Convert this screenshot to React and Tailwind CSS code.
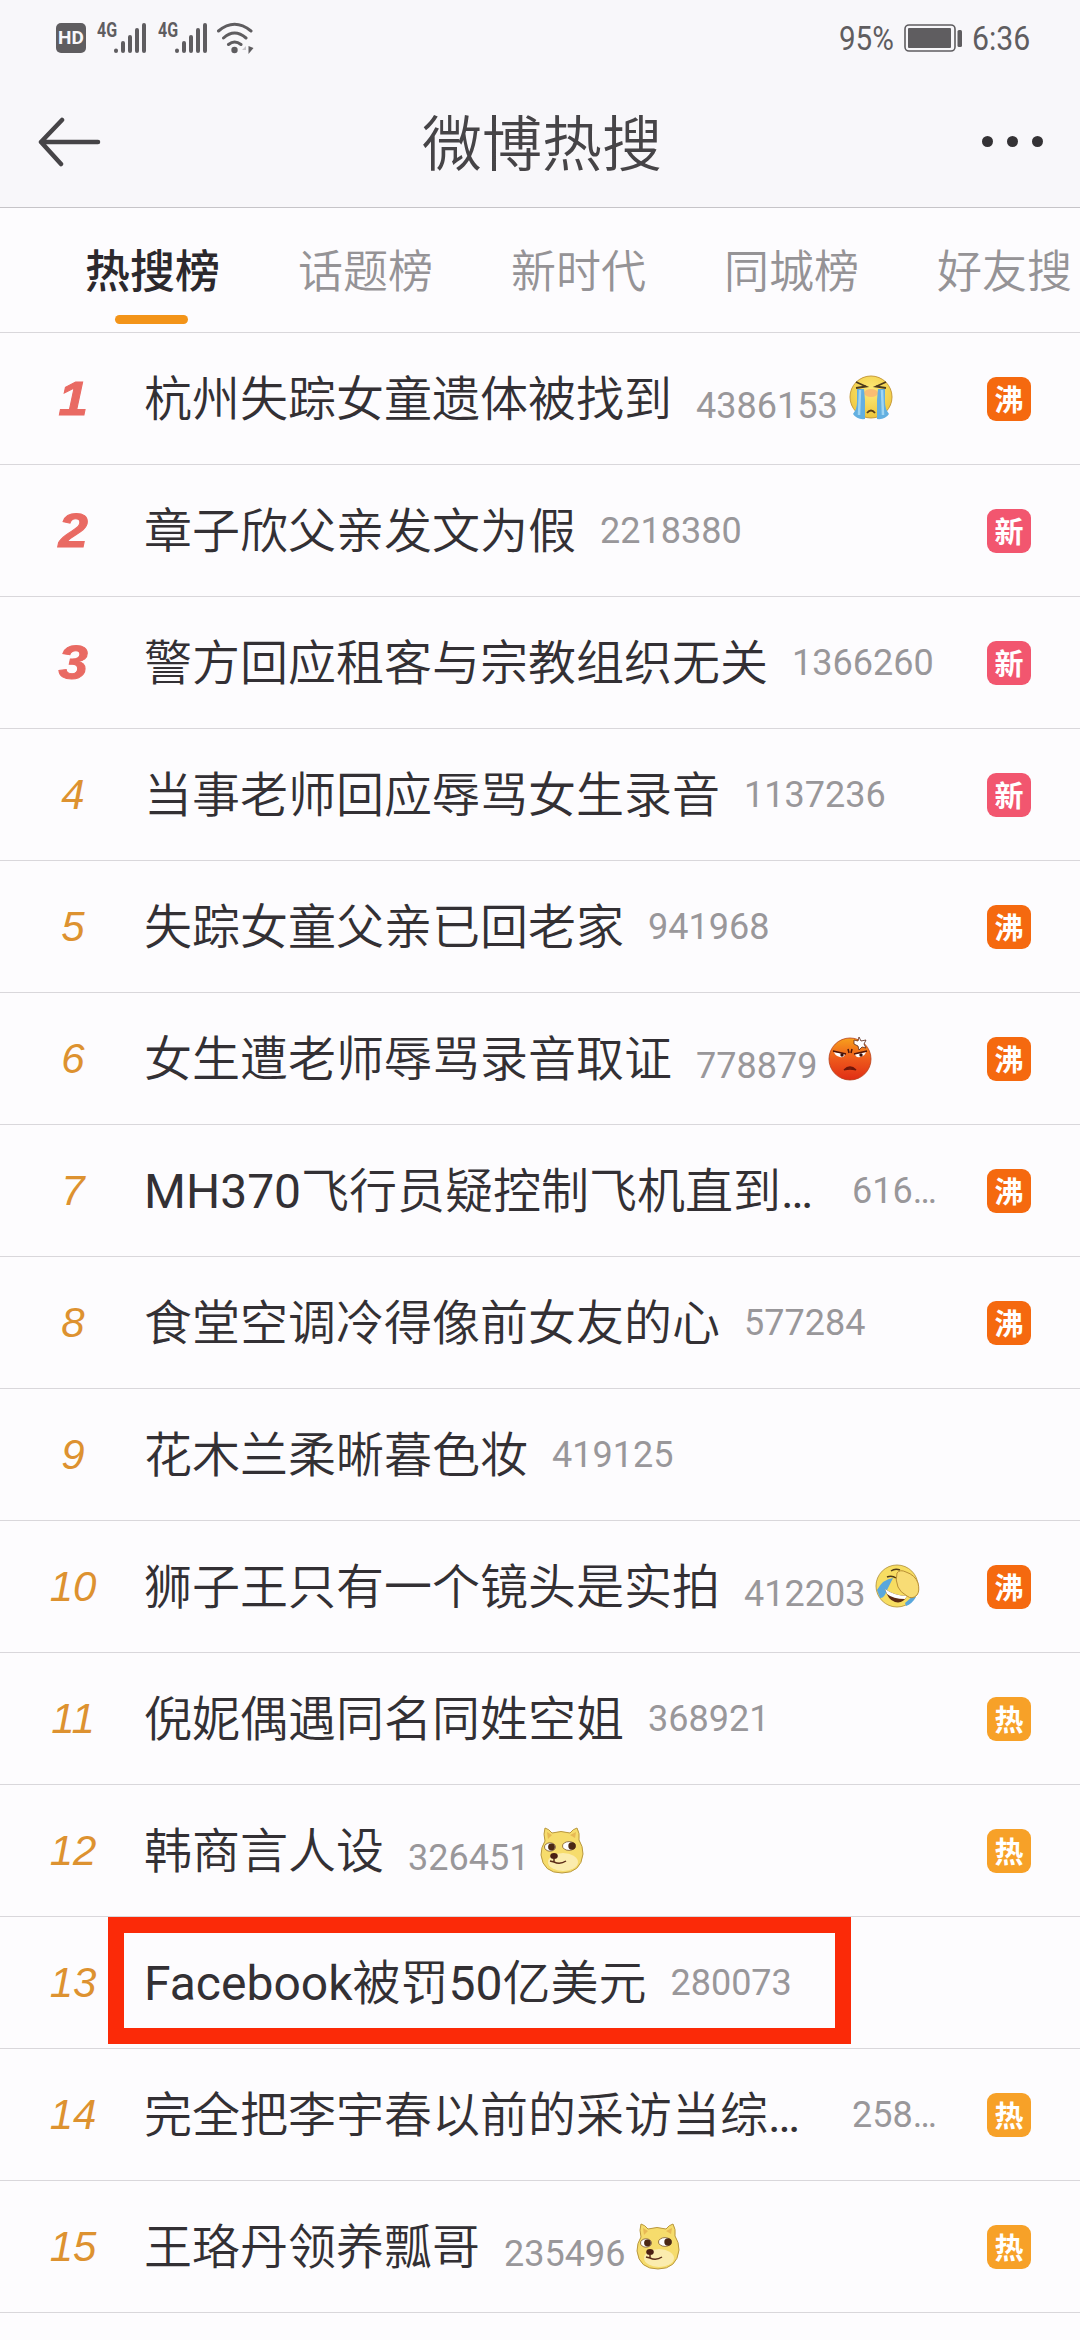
const tabs = ['热搜榜', '话题榜', '新时代', '同城榜', '好友搜'];

const badges = {
  沸: 'bg-[#f5690f]',
  新: 'bg-[#f2566f]',
  热: 'bg-[#f7a128]',
};

const topics = [
  { title: '杭州失踪女童遗体被找到', count: '4386153', emoji: 'cry', badge: '沸' },
  { title: '章子欣父亲发文为假', count: '2218380', badge: '新' },
  { title: '警方回应租客与宗教组织无关', count: '1366260', badge: '新' },
  { title: '当事老师回应辱骂女生录音', count: '1137236', badge: '新' },
  { title: '失踪女童父亲已回老家', count: '941968', badge: '沸' },
  { title: '女生遭老师辱骂录音取证', count: '778879', emoji: 'angry', badge: '沸' },
  { title: 'MH370飞行员疑控制飞机直到…', count: '616…', badge: '沸', clipped: true },
  { title: '食堂空调冷得像前女友的心', count: '577284', badge: '沸' },
  { title: '花木兰柔晰暮色妆', count: '419125' },
  { title: '狮子王只有一个镜头是实拍', count: '412203', emoji: 'laugh', badge: '沸' },
  { title: '倪妮偶遇同名同姓空姐', count: '368921', badge: '热' },
  { title: '韩商言人设', count: '326451', emoji: 'doge', badge: '热' },
  { title: 'Facebook被罚50亿美元', count: '280073', marked: true },
  { title: '完全把李宇春以前的采访当综…', count: '258…', badge: '热', clipped: true },
  { title: '王珞丹领养瓢哥', count: '235496', emoji: 'doge', badge: '热' },
];

function CryEmoji() {
  return (
    <svg viewBox="0 0 46 48" className="h-12 w-[46px]">
      <defs>
        <radialGradient id="cry-face" cx="50%" cy="35%" r="65%">
          <stop offset="0" stopColor="#fdeb7a" />
          <stop offset="1" stopColor="#efc63b" />
        </radialGradient>
      </defs>
      <circle cx="23" cy="22" r="21" fill="url(#cry-face)" stroke="#c79b3a" strokeWidth="1" />
      <ellipse cx="23" cy="18" rx="7" ry="4" fill="#f9bd72" />
      <path d="M9 14h7l1 11v19q-8 1-12-5 4-5 4-12zM37 14h-7l-1 11v19q8 1 12-5-4-5-4-12z" fill="#63afe0" />
      <path d="M12 15l-1 25M34 15l1 25" stroke="#9fd5f2" strokeWidth="2.5" fill="none" />
      <path d="M8 7l10 4.500-10 1.500M38 7l-10 4.500 10 1.500" stroke="#4d3a1c" strokeWidth="1.8" fill="none" />
      <path d="M19 38q4-5 8 0" stroke="#5a3d16" strokeWidth="1.8" fill="none" />
    </svg>
  );
}

function AngryEmoji() {
  return (
    <svg viewBox="0 0 46 48" className="h-12 w-[46px]">
      <defs>
        <linearGradient id="angry-face" x1="0" y1="0" x2="0" y2="1">
          <stop offset="0" stopColor="#f8a01c" />
          <stop offset="0.5" stopColor="#ee5a1c" />
          <stop offset="1" stopColor="#e02d14" />
        </linearGradient>
      </defs>
      <circle cx="23" cy="24" r="21" fill="url(#angry-face)" stroke="#b8401a" strokeWidth="0.8" />
      <path d="M7 17l11 2q-1 4-5 3-5-1-6-5zM39 17l-11 2q1 4 5 3 5-1 6-5z" fill="#fff" />
      <path d="M6 16l13 3M40 16l-13 3M21 14l1 4M25 14l-1 4" stroke="#4d1309" strokeWidth="1.5" />
      <circle cx="15" cy="20" r="1.7" fill="#3b0d07" />
      <circle cx="34" cy="20" r="1.7" fill="#3b0d07" />
      <path d="M17 35q6-6 12 0-6-2-12 0z" fill="#8e210e" stroke="#6b160a" strokeWidth="1.3" />
      <path d="M27 5l4 1 1-4 2 4 5-1-2 4 2 4-4-1-3 3-1-4-4-2z" fill="#fff" stroke="#5b2716" strokeWidth="0.8" />
    </svg>
  );
}

function LaughEmoji() {
  return (
    <svg viewBox="0 0 46 48" className="h-12 w-[46px]">
      <circle cx="22" cy="23" r="21" fill="#f7dd62" stroke="#b79743" strokeWidth="0.9" />
      <path d="M2 27q6-11 16-12l-6 12q-3 9-7 8zM30 40l8-7 3 1q-4 7-10 9z" fill="#5aa7dc" />
      <path d="M10 26q10 7 22 7-4 8-12 6-7-2-10-13z" fill="#5c2a12" />
      <path d="M10 26q10 7 22 7l-2 3q-12 0-18-5z" fill="#fff" />
      <path d="M12 14q5-2 9 1M16 8q4-3 9-1" stroke="#513b16" strokeWidth="1.5" fill="none" />
      <path d="M22 10q3-4 9-1 9 3 12 11 2 8-1 12-5 5-10 1-7-4-9-9-3-7-1-14z" fill="#f8dc75" stroke="#b98f35" strokeWidth="1" />
    </svg>
  );
}

function DogeEmoji() {
  return (
    <svg viewBox="0 0 46 48" className="h-12 w-[46px]">
      <path d="M6 1q4 1 7 5 9-3 18 0 3-4 7-5 3 5 2 12 4 6 4 14-2 19-21 19T2 28q0-8 4-14-2-7 0-13z" fill="#f6dc6c" stroke="#b9983f" strokeWidth="1" />
      <path d="M8 5l1 7 4-4zM37 5l-1 6-5-3z" fill="#e8b955" />
      <ellipse cx="24" cy="35" rx="15" ry="9" fill="#fbecae" />
      <ellipse cx="11" cy="20" rx="5.500" ry="4.200" fill="#fff" stroke="#7b5727" strokeWidth="0.8" />
      <ellipse cx="30" cy="19" rx="6.500" ry="4.400" fill="#fff" stroke="#7b5727" strokeWidth="0.8" />
      <circle cx="12.500" cy="20" r="3.400" fill="#4b2814" />
      <circle cx="33" cy="19" r="3.700" fill="#4b2814" />
      <ellipse cx="15" cy="29" rx="3.800" ry="3" fill="#4a1f13" />
      <path d="M15 32v3q6 3 12-1M15 35l-4-1" stroke="#5a2c18" strokeWidth="1.5" fill="none" />
    </svg>
  );
}

const emojis = { cry: CryEmoji, angry: AngryEmoji, laugh: LaughEmoji, doge: DogeEmoji };

function Signal() {
  return (
    <div className="flex">
      <span className="h-5 w-[17px] origin-left scale-x-[0.8] font-[Roboto] text-[20px] leading-[17px] font-bold">4G</span>
      <svg viewBox="0 0 33 32" className="h-8 w-[33px]" stroke="currentColor" strokeWidth="4" strokeLinecap="round">
        <path d="M2 28.5v.5M9 21v8M16 15v14M23 8v21M30 3v26" />
      </svg>
    </div>
  );
}

function StatusBar() {
  return (
    <div className="flex h-[76px] items-center justify-between pr-[51px] pl-14 text-[#5f5d60]">
      <div className="flex items-center">
        <span className="mr-[11px] flex h-[30px] w-[30px] items-center justify-center rounded-[5px] bg-[#5f5d60] font-[Roboto] text-[19px] font-bold text-[#f8f7fa]">
          HD
        </span>
        <Signal />
        <span className="w-[11px]" />
        <Signal />
        <svg viewBox="0 0 38 34" className="ml-2 h-[34px] w-[38px]" fill="none" stroke="currentColor" strokeWidth="3" strokeLinecap="round">
          <path d="M2.500 10Q18.500 -3.500 35 10M7.500 17Q18.500 7 30 17M12.500 23.500Q18.500 18.500 25 23.500" />
          <circle cx="18.500" cy="29" r="3.200" fill="currentColor" stroke="none" />
          <path d="M32.500 25l5 2-5 6z" fill="currentColor" stroke="none" />
          <path d="M30 25l-4 4h4z" fill="#c9c7cb" stroke="none" />
        </svg>
      </div>
      <div className="flex items-center font-[Roboto] text-[34px] leading-none">
        <span className="w-[55px] origin-left scale-x-[0.87] whitespace-nowrap">95%</span>
        <svg viewBox="0 0 60 28" className="ml-2.5 h-7 w-[60px]">
          <rect x="1" y="1" width="50" height="26" rx="4" fill="none" stroke="currentColor" strokeWidth="1.600" />
          <rect x="4" y="4" width="43" height="20" rx="1" fill="currentColor" />
          <rect x="53.500" y="6" width="4.500" height="17" rx="1.500" fill="currentColor" />
        </svg>
        <span className="ml-2 w-[57px] origin-left scale-x-[0.89] whitespace-nowrap">6:36</span>
      </div>
    </div>
  );
}

function TitleBar() {
  return (
    <div className="flex h-[131px] items-start justify-between pr-[37px] pl-[38px] text-[#464447]">
      <svg viewBox="0 0 64 50" className="mt-[41px] h-[50px] w-16" fill="none" stroke="currentColor" strokeWidth="4.500" strokeLinecap="round" strokeLinejoin="round">
        <path d="M24 3L3 25L23 47M3 25H60" />
      </svg>
      <h1 className="mt-[26px] text-[60px] leading-[88px] font-[350]">微博热搜</h1>
      <div className="mt-[60px] flex gap-[14px]">
        <span className="h-[11px] w-[11px] rounded-full bg-[#343235]" />
        <span className="h-[11px] w-[11px] rounded-full bg-[#343235]" />
        <span className="h-[11px] w-[11px] rounded-full bg-[#343235]" />
      </div>
    </div>
  );
}

// Latin runs keep the regular weight next to the lighter Chinese text
function TopicTitle({ children }) {
  return children.split(/([A-Za-z0-9…]+)/).map((part, i) =>
    i % 2 ? (
      <span key={i} className="font-normal">
        {part}
      </span>
    ) : (
      part
    )
  );
}

function TopicRow({ rank, topic }) {
  const Emoji = emojis[topic.emoji];

  return (
    <li className="relative flex h-[132px] items-center border-b border-[#d9d7db] pr-[49px]">
      <span
        className={
          rank <= 3
            ? 'w-36 scale-x-110 pl-0.5 text-center font-["Liberation_Sans"] text-[48px] font-bold text-[#e96a63] italic [-webkit-text-stroke:1px_#e96a63]'
            : 'w-36 pl-0.5 text-center font-["Liberation_Sans"] text-[42px] text-[#dd9230] italic'
        }
      >
        {rank}
      </span>
      <span className={topic.clipped ? 'w-[684px] pt-0.5 text-[48px] font-[350]' : 'pt-0.5 text-[48px] font-[350]'}>
        <TopicTitle>{topic.title}</TopicTitle>
      </span>
      <span className={Emoji ? 'mt-[14px] ml-6 text-[36px] text-[#99979a]' : 'ml-6 text-[36px] text-[#99979a]'}>
        {topic.count}
      </span>
      {Emoji && (
        <span className="ml-2.5">
          <Emoji />
        </span>
      )}
      {topic.badge && (
        <span
          className={`ml-auto flex h-11 w-11 items-center justify-center rounded-[9px] font-['Noto_Sans_CJK_SC',sans-serif] text-[29px] leading-none font-bold text-white ${badges[topic.badge]}`}
        >
          {topic.badge}
        </span>
      )}
      {topic.marked && (
        <span className="absolute top-0 left-[108px] h-[127px] w-[743px] border-[16px] border-[#fb2a08]" />
      )}
    </li>
  );
}

export default function App() {
  return (
    <div
      lang="zh-CN"
      className="h-[2340px] w-[1080px] overflow-hidden bg-[#fdfcfe] font-[Roboto,'Noto_Sans_CJK_SC',sans-serif] text-[#333034]"
    >
      <header className="h-[208px] border-b border-[#c6c4c8] bg-[#f8f7fa]">
        <StatusBar />
        <TitleBar />
      </header>
      <nav className="flex h-[125px] gap-[78px] border-b border-[#d9d7db] pl-[85px] text-[45px] leading-[130px] whitespace-nowrap">
        {tabs.map((tab, i) => (
          <a
            key={tab}
            className={i === 0 ? 'relative flex-none font-medium text-[#2c292d]' : 'flex-none font-[350] text-[#959396]'}
          >
            {tab}
            {i === 0 && (
              <span className="absolute top-[107px] left-[30px] h-[9px] w-[73px] rounded-full bg-[#f39419]" />
            )}
          </a>
        ))}
      </nav>
      <ol>
        {topics.map((topic, i) => (
          <TopicRow key={topic.title} rank={i + 1} topic={topic} />
        ))}
      </ol>
    </div>
  );
}
